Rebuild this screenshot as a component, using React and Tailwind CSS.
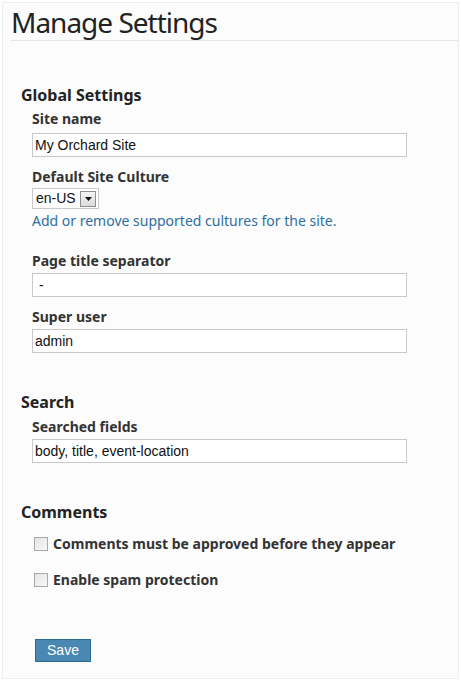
const fieldLabel = "block text-[14px] font-bold leading-[18px] text-[#333]";
const textInput =
  "block w-[375px] h-[24px] border border-[#c9c9c9] bg-white px-[2px] text-[14px] text-[#111] font-['Liberation_Sans',Arial,sans-serif] outline-none";

function Field({ label, value, className = "" }) {
  return (
    <div className={className}>
      <label className={fieldLabel}>{label}</label>
      <input className={`${textInput} mt-[3px]`} defaultValue={value} />
    </div>
  );
}

function Check({ label, className = "" }) {
  return (
    <label className={`flex items-center gap-[5px] ${className}`}>
      <span className="w-[14px] h-[14px] border border-[#a9a9a9] bg-gradient-to-br from-[#e4e4e4] to-[#f8f8f8]" />
      <span className="text-[14px] font-bold leading-[18px] text-[#333]">{label}</span>
    </label>
  );
}

export default function App() {
  return (
    <div className="w-[461px] h-[681px] bg-white p-[2px] font-['Noto_Sans','Open_Sans',sans-serif]">
      <div className="h-full border border-[#eeeeee] bg-[#fcfcfc] pl-[8px]">
        {/* Title */}
        <h1 className="pt-[3px] pb-[2px] text-[28px] leading-[32px] font-normal tracking-[-1px] text-[#222] border-b border-[#e6e6e6]">
          Manage Settings
        </h1>

        <div className="pl-[10px] pt-[44px]">
          {/* Global */}
          <h2 className="text-[16px] font-bold leading-[20px] text-[#222]">Global Settings</h2>
          <div className="pl-[11px] pt-[5px]">
            <div>
              <label className={fieldLabel}>Site name</label>
              <input className={`${textInput} mt-[5px]`} defaultValue="My Orchard Site" />
            </div>

            <div className="mt-[11px]">
              <label className={fieldLabel}>Default Site Culture</label>
              <div className="mt-[2px] flex items-center w-[67px] h-[21px] border border-[#c9c9c9] bg-white pl-[3px] pr-[2px] justify-between">
                <span className="text-[14px] text-[#111] font-['Liberation_Sans',Arial,sans-serif]">en-US</span>
                <span className="w-[16px] h-[16px] border border-[#8f8f8f] bg-gradient-to-b from-[#f4f4f4] to-[#dcdcdc] flex items-center justify-center">
                  <svg width="7" height="4" viewBox="0 0 7 4">
                    <path d="M0 0h7L3.5 4z" fill="#111" />
                  </svg>
                </span>
              </div>
              <a className="block mt-[2px] text-[14px] leading-[20px] text-[#2f6f9f]">
                Add or remove supported cultures for the site.
              </a>
            </div>

            <Field className="mt-[21px]" label="Page title separator" value=" - " />
            <Field className="mt-[11px]" label="Super user" value="admin" />
          </div>

          {/* Search */}
          <h2 className="mt-[39px] text-[16px] font-bold leading-[20px] text-[#222]">Search</h2>
          <div className="pl-[11px] pt-[6px]">
            <Field label="Searched fields" value="body, title, event-location" />
          </div>

          {/* Comments */}
          <h2 className="mt-[39px] text-[16px] font-bold leading-[20px] text-[#222]">Comments</h2>
          <div className="pl-[13px] pt-[13px]">
            <Check label="Comments must be approved before they appear" />
            <Check className="mt-[18px]" label="Enable spam protection" />
          </div>

          <button className="ml-[14px] mt-[50px] w-[56px] h-[23px] bg-[#4a87b3] border border-[#2f6a93] text-white text-[14px] font-['Liberation_Sans',Arial,sans-serif]">
            Save
          </button>
        </div>
      </div>
    </div>
  );
}
